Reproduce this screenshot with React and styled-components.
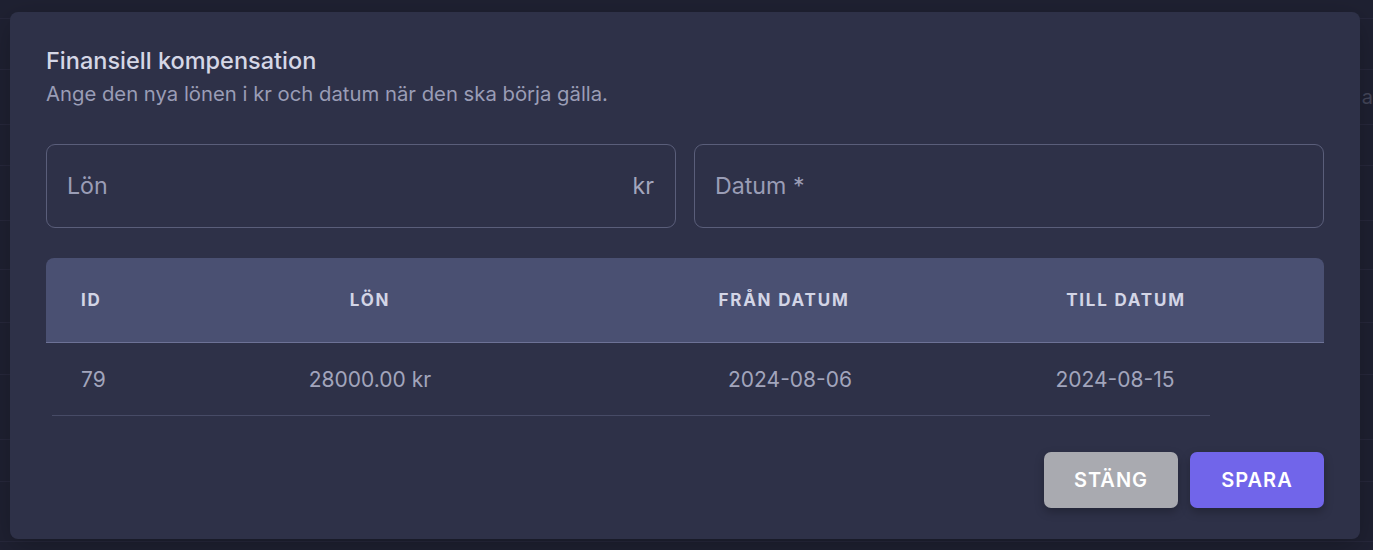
import React from "react";
import styled, { createGlobalStyle } from "styled-components";

const Global = createGlobalStyle`
  html, body { margin: 0; padding: 0; background: #222437; }
  body { font-family: Inter, "Noto Sans", "Liberation Sans", sans-serif; }
  * { box-sizing: border-box; }
`;

const Page = styled.div`
  position: relative;
  width: 1373px;
  height: 550px;
  overflow: hidden;
  background: #222437;
`;

const BackList = styled.div`
  display: flex;
  flex-direction: column;
`;

const BackRow = styled.div`
  height: ${(p) => p.$h}px;
  border-bottom: 1px solid #2c2e45;
  display: flex;
  align-items: center;
  justify-content: ${(p) => (p.$center ? "center" : "flex-end")};
  color: #55586e;
  font-size: 20px;
`;

const Overlay = styled.div`
  position: absolute;
  inset: 0;
  background: rgba(22, 23, 36, 0.25);
`;

const Dialog = styled.div`
  position: absolute;
  left: 10px;
  top: 12px;
  width: 1350px;
  height: 527px;
  background: #2e3148;
  border-radius: 8px;
  padding: 34px 36px 0 36px;
  display: flex;
  flex-direction: column;
  box-shadow: 0 8px 30px rgba(0, 0, 0, 0.25);
`;

const Title = styled.h2`
  margin: 0;
  font-size: 23.5px;
  font-weight: 500;
  color: #d5d7e6;
  line-height: 30px;
`;

const Subtitle = styled.p`
  margin: 4px 0 0 0;
  font-size: 20.3px;
  font-weight: 400;
  color: #9a9db6;
  line-height: 28px;
`;

const Fields = styled.div`
  display: grid;
  grid-template-columns: 1fr 1fr;
  gap: 18px;
  margin-top: 36px;
`;

const Field = styled.div`
  height: 84px;
  border: 1px solid #5a5e7a;
  border-radius: 9px;
  display: flex;
  align-items: center;
  justify-content: space-between;
  padding: 0 21px 0 20px;
  font-size: 23.2px;
  color: #9a9db6;
`;

const Suffix = styled.span`
  color: #a3a6bd;
`;

const Table = styled.div`
  margin-top: 30px;
  display: flex;
  flex-direction: column;
`;

const HeadRow = styled.div`
  display: grid;
  grid-template-columns: 160px 328px 500px 184px 1fr;
  height: 85px;
  align-items: center;
  background: #4a5072;
  border-radius: 8px 8px 0 0;
  border-bottom: 1px solid #6d7296;
`;

const HeadCell = styled.div`
  font-size: 17px;
  font-weight: 700;
  letter-spacing: 1.8px;
  color: #d3d5e6;
  text-transform: uppercase;
  text-align: ${(p) => (p.$left ? "left" : "center")};
  padding-left: ${(p) => (p.$left ? "35px" : "0")};
`;

const BodyRow = styled.div`
  display: grid;
  grid-template-columns: 158px 320px 520px 130px 1fr;
  height: 73px;
  align-items: center;
  margin-left: 6px;
  width: 1158px;
  border-bottom: 1px solid #474b66;
`;

const Cell = styled.div`
  font-size: 21px;
  color: #a2a5bc;
  text-align: ${(p) => (p.$left ? "left" : "center")};
  padding-left: ${(p) => (p.$left ? "29px" : "0")};
  white-space: nowrap;
`;

const Actions = styled.div`
  display: flex;
  justify-content: flex-end;
  gap: 12px;
  margin-top: 36px;
`;

const Button = styled.button`
  width: 134px;
  height: 56px;
  border: none;
  border-radius: 7px;
  font-family: inherit;
  font-size: 20px;
  font-weight: 600;
  letter-spacing: 1px;
  color: #ffffff;
  background: ${(p) => (p.$primary ? "#7165ea" : "#a9aab0")};
  box-shadow: 0 4px 10px rgba(0, 0, 0, 0.25);
  cursor: pointer;
`;

const backRows = [
  { h: 19 },
  { h: 51 },
  { h: 55, t: "a" },
  { h: 41 },
  { h: 55 },
  { h: 49 },
  { h: 53 },
  { h: 52 },
  { h: 65 },
  { h: 42 },
  { h: 60 },
];

export default function App() {
  return (
    <>
      <Global />
      <Page>
        <BackList>
          {backRows.map((r, i) => (
            <BackRow key={i} $h={r.h}>
              {r.t || ""}
            </BackRow>
          ))}
        </BackList>
        <Overlay />
        <Dialog>
          <Title>Finansiell kompensation</Title>
          <Subtitle>Ange den nya lönen i kr och datum när den ska börja gälla.</Subtitle>
          <Fields>
            <Field>
              <span>Lön</span>
              <Suffix>kr</Suffix>
            </Field>
            <Field>
              <span>Datum *</span>
            </Field>
          </Fields>
          <Table>
            <HeadRow>
              <HeadCell $left>ID</HeadCell>
              <HeadCell>Lön</HeadCell>
              <HeadCell>Från datum</HeadCell>
              <HeadCell>Till datum</HeadCell>
              <div />
            </HeadRow>
            <BodyRow>
              <Cell $left>79</Cell>
              <Cell>28000.00 kr</Cell>
              <Cell>2024-08-06</Cell>
              <Cell>2024-08-15</Cell>
              <div />
            </BodyRow>
          </Table>
          <Actions>
            <Button>STÄNG</Button>
            <Button $primary>SPARA</Button>
          </Actions>
        </Dialog>
      </Page>
    </>
  );
}
